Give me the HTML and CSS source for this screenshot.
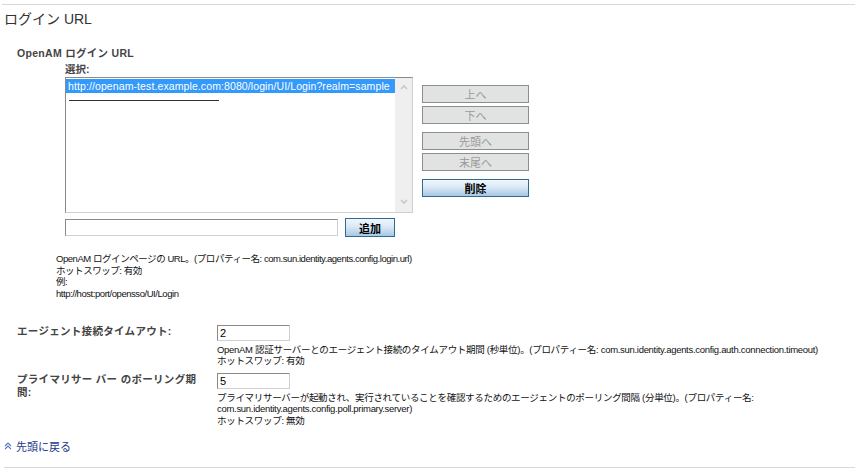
FILE: index.html
```html
<!DOCTYPE html>
<html lang="ja">
<head>
<meta charset="utf-8">
<title>ログイン URL</title>
<link rel="stylesheet" href="styles.css">
</head>
<body>
<div class="page">
  <div class="rule rule-top"></div>
  <h1 class="title">ログイン URL</h1>

  <div class="field-label">OpenAM ログイン URL</div>
  <div class="editlist">
    <div class="sub-label">選択:</div>
    <div class="list-row">
      <div class="listbox">
        <div class="list-items">
          <div class="item selected">http://openam-test.example.com:8080/login/UI/Login?realm=sample</div>
          <div class="item empty"><span class="empty-line"></span></div>
        </div>
        <div class="scrollbar">
          <svg class="arrow" width="10" height="8" viewBox="0 0 10 8"><path d="M2 6 L5 3 L8 6" fill="none" stroke="#c8c8c8" stroke-width="1.6"/></svg>
          <svg class="arrow" width="10" height="8" viewBox="0 0 10 8"><path d="M2 2 L5 5 L8 2" fill="none" stroke="#c8c8c8" stroke-width="1.6"/></svg>
        </div>
      </div>
      <div class="btn-col">
        <button class="btn disabled">上へ</button>
        <button class="btn disabled">下へ</button>
        <button class="btn disabled group">先頭へ</button>
        <button class="btn disabled">末尾へ</button>
        <button class="btn primary group">削除</button>
      </div>
    </div>
    <div class="add-row">
      <input class="text-in wide" type="text" value="">
      <button class="btn primary small">追加</button>
    </div>
  </div>
  <div class="help">
    <div>OpenAM ログインページの URL。(プロパティー名: com.sun.identity.agents.config.login.url)</div>
    <div>ホットスワップ: 有効</div>
    <div>例:</div>
    <div>http://host:port/opensso/UI/Login</div>
  </div>

  <div class="prop-row first">
    <div class="prop-label">エージェント接続タイムアウト:</div>
    <div class="prop-value">
      <input class="text-in short" type="text" value="2">
      <div class="desc">OpenAM 認証サーバーとのエージェント接続のタイムアウト期間 (秒単位)。(プロパティー名: com.sun.identity.agents.config.auth.connection.timeout)</div>
      <div class="desc">ホットスワップ: 有効</div>
    </div>
  </div>
  <div class="prop-row">
    <div class="prop-label">プライマリサー バー のポーリング期間:</div>
    <div class="prop-value">
      <input class="text-in short" type="text" value="5">
      <div class="desc">プライマリサーバーが起動され、実行されていることを確認するためのエージェントのポーリング間隔 (分単位)。(プロパティー名: com.sun.identity.agents.config.poll.primary.server)</div>
      <div class="desc">ホットスワップ: 無効</div>
    </div>
  </div>

  <a class="back" href="#">
    <svg width="8" height="8" viewBox="0 0 8 8"><path d="M1 4 L4 1 L7 4 M1 7 L4 4 L7 7" fill="none" stroke="#5a7fc4" stroke-width="1.2"/></svg>
    <span>先頭に戻る</span>
  </a>
  <div class="rule rule-bottom"></div>
</div>
</body>
</html>
```

FILE: styles.css
```css
* { box-sizing: border-box; }
body {
  margin: 0;
  background: #fff;
  color: #000;
  font-family: "Liberation Sans", "Noto Sans CJK JP", sans-serif;
}
.page { padding: 4px 0 0 0; }
.rule { height: 1px; background: #d3d9dd; }
.rule-top { margin-left: 2px; }
.title {
  margin: 5px 0 0 4px;
  font-size: 14px;
  line-height: 18px;
  font-weight: normal;
  color: #333;
}
.field-label {
  margin: 18px 0 0 17px;
  font-size: 10.5px;
  line-height: 14px;
  font-weight: bold;
  color: #444;
  letter-spacing: 0.3px;
}
.editlist { margin-left: 65px; }
.sub-label {
  margin-top: 2px;
  font-size: 10.5px;
  line-height: 14px;
  font-weight: bold;
  color: #444;
}
.list-row {
  display: flex;
  align-items: flex-start;
  margin-top: 1px;
}
.listbox {
  width: 348px;
  height: 136px;
  display: flex;
  border: 1px solid;
  border-color: #8a8a8a #cfcfcf #cfcfcf #8a8a8a;
}
.list-items { flex: 1; padding: 1px 0 0 0; }
.item {
  height: 14px;
  font-size: 10.5px;
  line-height: 14px;
  padding-left: 2px;
  white-space: nowrap;
  color: #000;
  letter-spacing: 0.1px;
}
.item.selected { background: #3399fa; color: #fff; }
.item.empty { padding: 7px 0 0 3px; }
.empty-line { display: block; width: 150px; height: 1px; background: #333; }
.scrollbar {
  width: 17px;
  background: #efefef;
  display: flex;
  flex-direction: column;
  justify-content: space-between;
  align-items: center;
  padding: 5px 0 6px;
}
.arrow { display: block; }
.btn-col {
  display: flex;
  flex-direction: column;
  margin: 8px 0 0 9px;
}
.btn {
  width: 107px;
  height: 18px;
  padding: 0;
  font-family: "Noto Sans CJK JP", sans-serif;
  font-size: 11px;
  line-height: 16px;
  margin-top: 3px;
}
.btn-col .btn:first-child { margin-top: 0; }
.btn.group { margin-top: 8px; }
.btn.disabled {
  background: #e1e3e3;
  border: 1px solid #8e8e8e;
  color: #9a9a9a;
}
.btn.primary {
  background: linear-gradient(#f0f6fc, #dbe9f6 45%, #a7c7e4);
  border: 1px solid #2f6a90;
  color: #000;
  font-weight: bold;
}
.add-row {
  display: flex;
  align-items: center;
  margin-top: 5px;
}
.text-in {
  height: 17px;
  border: 1px solid;
  border-color: #8a8a8a #cfcfcf #cfcfcf #8a8a8a;
  font-family: "Liberation Sans", sans-serif;
  font-size: 11px;
  padding: 0 2px;
  margin: 0;
}
.text-in.wide { width: 273px; }
.text-in.short { width: 73px; height: 16px; display: block; }
.btn.small { width: 50px; height: 19px; margin: 0 0 0 7px; }
.help {
  margin: 16px 0 0 56px;
  font-size: 9.5px;
  line-height: 11.7px;
  color: #111;
  letter-spacing: -0.45px;
}
.prop-row {
  display: grid;
  grid-template-columns: 200px 625px;
  margin-left: 17px;
  margin-top: 6px;
}
.prop-row.first { margin-top: 25px; }
.prop-label {
  font-size: 10.5px;
  line-height: 13px;
  font-weight: bold;
  color: #444;
  padding-right: 18px;
  letter-spacing: 0.3px;
}
.desc {
  font-size: 9.5px;
  line-height: 11.5px;
  color: #111;
  letter-spacing: -0.3px;
}
.prop-value .text-in { margin-bottom: 3px; }
.back {
  display: flex;
  align-items: center;
  gap: 4px;
  margin: 13px 0 0 4px;
  color: #1a3a8c;
  text-decoration: none;
  font-family: "Noto Sans CJK JP", sans-serif;
  font-size: 11px;
  line-height: 14px;
}
.rule-bottom { margin: 14px 0 0 4px; }
```
